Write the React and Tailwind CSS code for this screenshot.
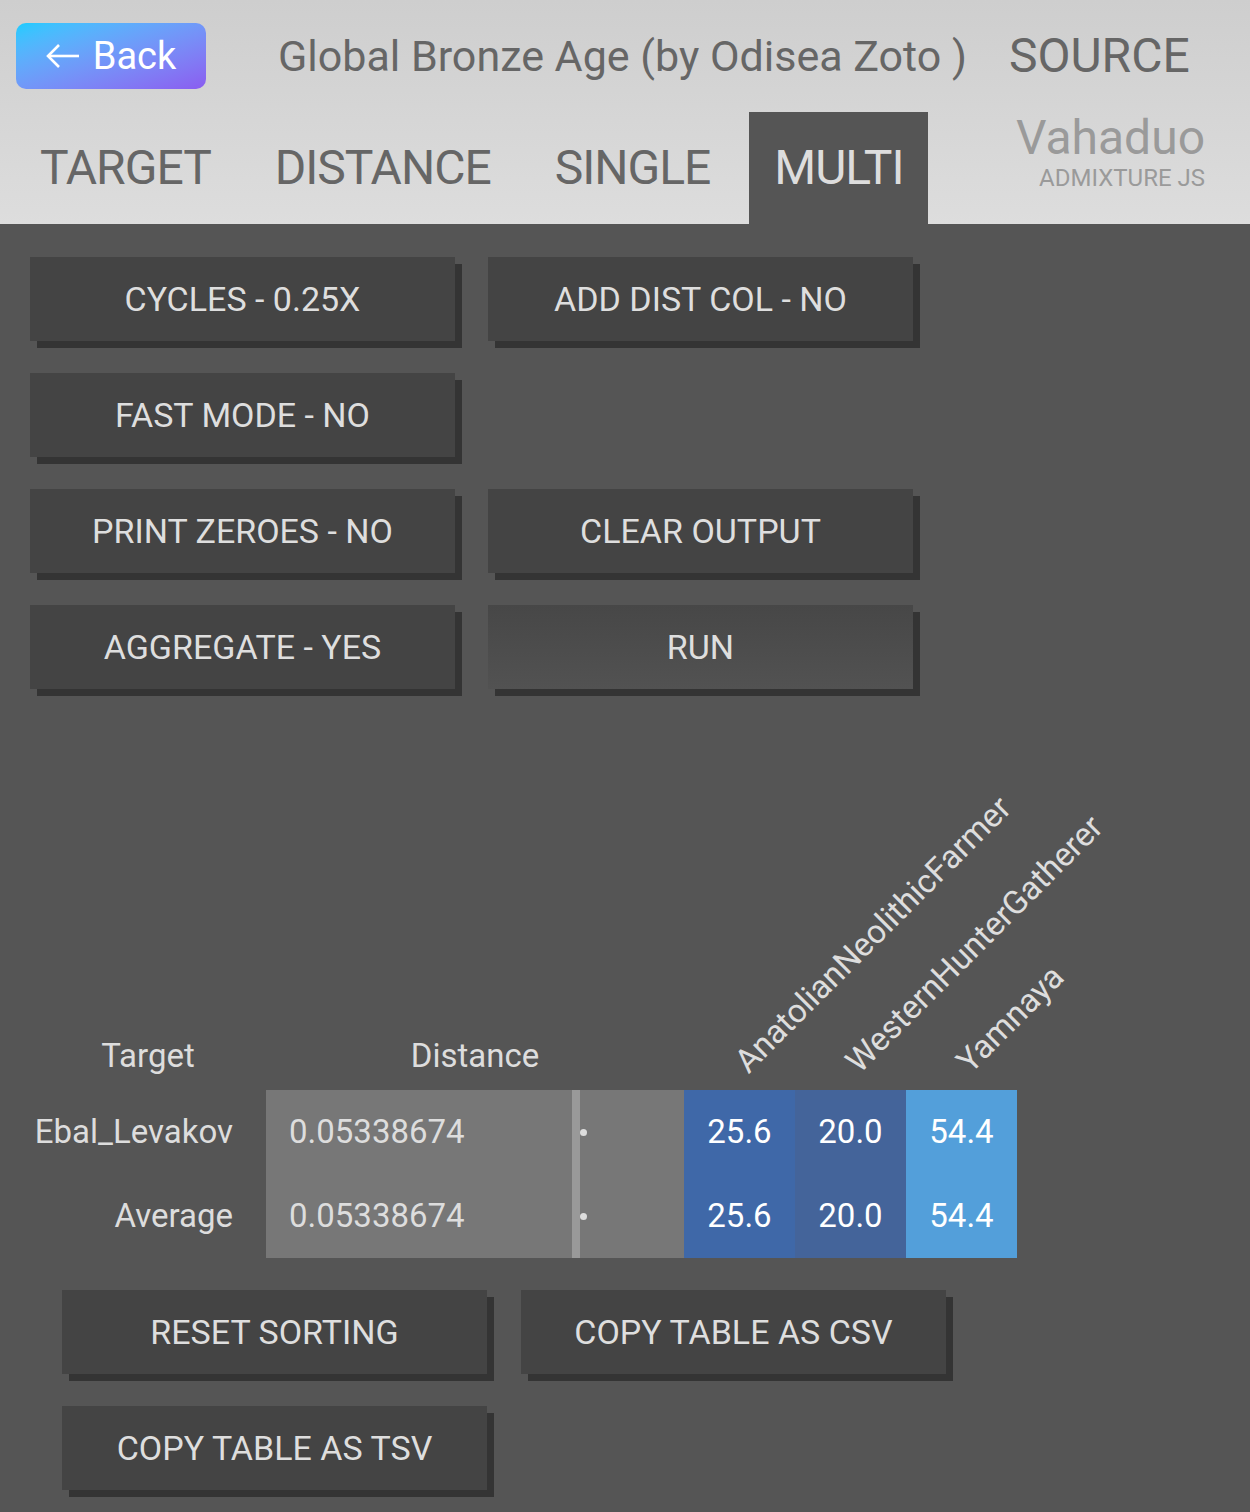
import React from 'react'

const font = { fontFamily: 'Roboto, "Noto Sans", sans-serif' }

function Btn({ children, run }) {
  return (
    <button
      className={`h-[84px] w-[425px] text-[34px] text-[#dedede] shadow-[7px_7px_0_#343434] ${
        run ? 'bg-gradient-to-b from-[#474747] to-[#525252]' : 'bg-[#444444]'
      }`}
    >
      {children}
    </button>
  )
}

const rows = [
  { name: 'Ebal_Levakov', dist: '0.05338674', vals: ['25.6', '20.0', '54.4'] },
  { name: 'Average', dist: '0.05338674', vals: ['25.6', '20.0', '54.4'] },
]

const pops = ['AnatolianNeolithicFarmer', 'WesternHunterGatherer', 'Yamnaya']
const popColors = ['bg-[#3f68a8]', 'bg-[#44649a]', 'bg-[#539fda]']

export default function App() {
  return (
    <div className="min-h-screen w-full bg-[#555555]" style={font}>
      {/* Header */}
      <header className="h-[224px] bg-gradient-to-b from-[#cecece] to-[#dddddd]">
        <div className="flex h-[112px] items-center pl-[16px]">
          <button className="flex h-[66px] w-[190px] items-center justify-center rounded-[10px] bg-gradient-to-br from-[#14ccff] to-[#8a5cf0] text-[38px] text-white">
            <svg width="34" height="26" viewBox="0 0 34 26" fill="none" stroke="white" strokeWidth="2.6" className="mr-[13px]">
              <path d="M33 13H2" />
              <path d="M13 2L2 13l11 11" />
            </svg>
            Back
          </button>
          <h1 className="ml-[72px] text-[43px] text-[#666666]">Global Bronze Age (by Odisea Zoto )</h1>
          <span className="ml-[42px] text-[48px] text-[#666666]">SOURCE</span>
        </div>
        <div className="flex h-[112px] items-stretch pl-[15px] pr-[45px]">
          <nav className="flex gap-[14px] text-[48px] tracking-[-1px] text-[#666666]">
            <div className="flex items-center px-[25px]">TARGET</div>
            <div className="flex items-center px-[25px]">DISTANCE</div>
            <div className="flex items-center px-[25px]">SINGLE</div>
            <div className="flex items-center bg-[#555555] px-[25px] text-[#dddddd]">MULTI</div>
          </nav>
          <div className="ml-auto flex flex-col items-end leading-none">
            <span className="mt-[2px] text-[48px] text-[#9a9a9a]">Vahaduo</span>
            <span className="mt-[4px] text-[24px] text-[#9a9a9a]">ADMIXTURE JS</span>
          </div>
        </div>
      </header>

      <main className="px-[30px] pt-[33px] pb-[20px]">
        {/* Options */}
        <div className="grid grid-cols-[425px_425px] gap-x-[33px] gap-y-[32px]">
          <Btn>CYCLES - 0.25X</Btn>
          <Btn>ADD DIST COL - NO</Btn>
          <Btn>FAST MODE - NO</Btn>
          <div />
          <Btn>PRINT ZEROES - NO</Btn>
          <Btn>CLEAR OUTPUT</Btn>
          <Btn>AGGREGATE - YES</Btn>
          <Btn run>RUN</Btn>
        </div>

        {/* Result table */}
        <table className="mt-[101px] border-collapse text-[#dddddd]">
          <thead>
            <tr className="h-[300px]">
              <th className="w-[236px] pb-[10px] align-bottom text-[33px] font-normal">Target</th>
              <th colSpan={3} className="pb-[10px] align-bottom text-[33px] font-normal">Distance</th>
              {pops.map((p) => (
                <th key={p} className="relative w-[111px] p-0 align-bottom font-normal">
                  <span className="absolute bottom-[12px] left-[68px] origin-bottom-left -rotate-45 whitespace-nowrap text-[33px] leading-none">
                    {p}
                  </span>
                </th>
              ))}
            </tr>
          </thead>
          <tbody>
            {rows.map((r) => (
              <tr key={r.name} className="h-[84px]">
                <td className="pr-[33px] text-right text-[33px]">{r.name}</td>
                <td className="w-[306px] bg-[#777777] pl-[23px] text-[33px]">{r.dist}</td>
                <td className="w-[8px] bg-[#999999] p-0" />
                <td className="w-[104px] bg-[#777777] p-0 align-middle">
                  <span className="block h-[7px] w-[7px] rounded-full bg-[#dddddd]" />
                </td>
                {r.vals.map((v, i) => (
                  <td key={i} className={`${popColors[i]} w-[111px] text-center text-[33px] text-white`}>
                    {v}
                  </td>
                ))}
              </tr>
            ))}
          </tbody>
        </table>

        {/* Table actions */}
        <div className="mt-[32px] ml-[32px] grid grid-cols-[425px_425px] gap-x-[34px] gap-y-[32px]">
          <Btn>RESET SORTING</Btn>
          <Btn>COPY TABLE AS CSV</Btn>
          <Btn>COPY TABLE AS TSV</Btn>
        </div>
      </main>
    </div>
  )
}
